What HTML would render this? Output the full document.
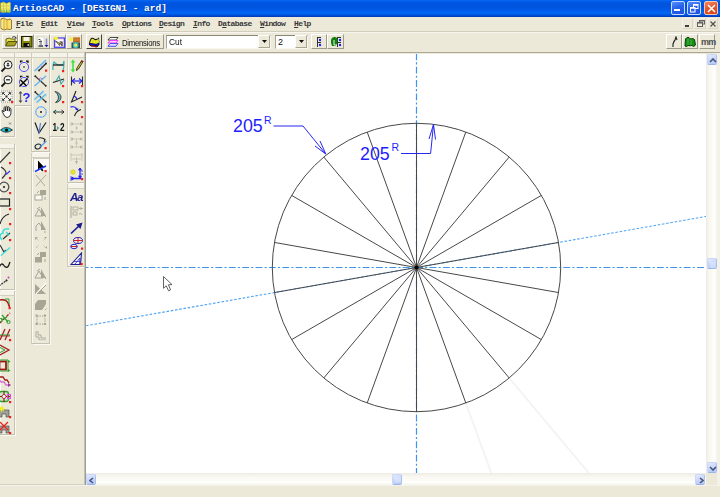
<!DOCTYPE html>
<html><head><meta charset="utf-8">
<style>
*{margin:0;padding:0;box-sizing:border-box}
html,body{width:720px;height:497px;overflow:hidden;background:#ECE9D8;font-family:"Liberation Sans",sans-serif}
.a{position:absolute}
#title{left:0;top:0;width:720px;height:17px;background:linear-gradient(#0A6AF0 0px,#0058E6 2px,#0053DD 6px,#005AE8 10px,#0068F5 13px,#0054DC 15px,#0040C0 16.5px,#ECE9D8 17px)}
#ttext{left:13px;top:2px;font:bold 9.5px/14px "Liberation Mono",monospace;letter-spacing:0px;color:#fff;text-shadow:1px 1px 0 #0a3aa0;white-space:pre}
.tb{top:1px;width:14px;height:14px;border:1px solid #c8dcff;border-radius:2px;background:linear-gradient(160deg,#5890fa,#2a62ec 45%,#1c50dc)}
#menu{left:0;top:17px;width:720px;height:14px;background:#ECE9D8}
.mi{top:19px;font:bold 8px/10px "Liberation Mono",monospace;letter-spacing:-0.6px;color:#383838;white-space:pre}
.mi u{text-decoration:underline}
#tbar{left:0;top:31px;width:720px;height:21px;background:#ECE9D8}
.btn{top:34px;width:16px;height:15px;border-right:1px solid #9d9a88;border-bottom:1px solid #9d9a88;border-left:1px solid #fff;border-top:1px solid #fff;background:#ECE9D8}
.ctb{border-right:1px solid #a8a595;border-bottom:1px solid #a8a595;border-left:1px solid #fff;border-top:1px solid #fff}
.sbb{width:10px;height:11px;border-radius:2px;background:linear-gradient(160deg,#e2eafe,#c4d4fb 60%,#b4c8f6);border:1px solid #c8d7fb;border-bottom-color:#9fb4e6;border-right-color:#aec0ee}
.tbx{background:#ECE9D8;border-right:1px solid #c5c2b2;border-bottom:1px solid #c5c2b2;box-shadow:inset 1px 0 0 #faf9f3,-1px 0 0 #cfccbc,1px 1px 0 #faf9f3}
.tbx::before{content:"";position:absolute;left:0;top:0;right:0;height:4px;background:#f5f3ea;border-bottom:1px solid #d3d0c0}
.ic{filter:blur(0.25px)}
#canvas{left:86px;top:54px;width:621px;height:419px;background:#fff;overflow:hidden}
</style></head><body>
<div id="title" class="a"></div>
<div id="ttext" class="a">ArtiosCAD - [DESIGN1 - ard]</div>
<div class="a tb" style="left:671px"><div class="a" style="left:2px;top:7px;width:6px;height:2px;background:#fff"></div></div>
<div class="a tb" style="left:687px"><svg class="a" style="left:2px;top:2px" width="9" height="9" viewBox="0 0 9 9"><rect x="3.5" y="0.5" width="4.5" height="4" fill="none" stroke="#fff" stroke-width="1"/><path d="M3.5 1h4.5" stroke="#fff" stroke-width="1.5"/><rect x="0.5" y="3.5" width="4.5" height="4.5" fill="#2a64e8" stroke="#fff" stroke-width="1"/><path d="M0.5 4h4.5" stroke="#fff" stroke-width="1.5"/></svg></div>
<div class="a tb" style="left:704px;border-color:#f4c4b4;background:linear-gradient(160deg,#f08868,#e25a30 45%,#d04418)"><svg class="a" style="left:1px;top:1px" width="11" height="11" viewBox="0 0 11 11"><path d="M2 2L9 9M9 2L2 9" stroke="#fff" stroke-width="1.5"/></svg></div>
<svg class="a" style="left:0;top:1px" width="12" height="13" viewBox="0 0 12 13"><path d="M0.5 2 L3.5 1 L6.5 2.5 L9.5 1 L10.5 2 L10.5 11 L9.5 11.5 L6.5 11 L3.5 11.5 L0.5 11Z" fill="#f0ec70" stroke="#b0a030" stroke-width="0.7"/><path d="M3.5 1v10.5M6.5 2.5v8.5M0.5 5h10M0.5 8h10" stroke="#c8c040" stroke-width="0.6"/><path d="M1 10h9" stroke="#30b030" stroke-width="1.2" stroke-dasharray="1.5 1"/></svg>
<div id="menu" class="a"></div>
<div class="a mi" style="left:16px"><u>F</u>ile</div>
<div class="a mi" style="left:41px"><u>E</u>dit</div>
<div class="a mi" style="left:67px"><u>V</u>iew</div>
<div class="a mi" style="left:92px"><u>T</u>ools</div>
<div class="a mi" style="left:122px"><u>O</u>ptions</div>
<div class="a mi" style="left:159px"><u>D</u>esign</div>
<div class="a mi" style="left:193px"><u>I</u>nfo</div>
<div class="a mi" style="left:218px">D<u>a</u>tabase</div>
<div class="a mi" style="left:260px"><u>W</u>indow</div>
<div class="a mi" style="left:294px"><u>H</u>elp</div>

<svg class="a" style="left:0;top:17px" width="13" height="14" viewBox="0 0 13 14"><path d="M1 2 L4 1 L7 3 L10 2 L11.5 3 L11.5 12 L10 12.5 L7 12 L4 13 L1 11.5Z" fill="#f8e070" stroke="#806010" stroke-width="0.8"/><path d="M4 1v12M7 3v9" stroke="#d0a030" stroke-width="0.8"/><path d="M2 3v8" stroke="#fff8b0" stroke-width="1"/></svg>
<div class="a" style="left:682px;top:18px;width:11px;height:11px;border:1px solid #f4f2ea;border-right-color:#dcd8c8;border-bottom-color:#dcd8c8"><div class="a" style="left:2px;top:6px;width:4px;height:2px;background:#404040"></div></div>
<div class="a" style="left:694px;top:18px;width:12px;height:11px;border:1px solid #f4f2ea;border-right-color:#dcd8c8;border-bottom-color:#dcd8c8"><svg class="a" style="left:2px;top:1px" width="8" height="7"><rect x="2.5" y="0.5" width="5" height="3.5" fill="none" stroke="#606060"/><rect x="0.5" y="2.5" width="5" height="4" fill="#ECE9D8" stroke="#606060"/><path d="M1 3h4M3 1h4" stroke="#606060"/></svg></div>
<div class="a" style="left:707px;top:18px;width:11px;height:11px;border:1px solid #f4f2ea;border-right-color:#dcd8c8;border-bottom-color:#dcd8c8"><svg class="a" style="left:1px;top:1px" width="8" height="8"><path d="M1.5 1.5L6.5 6.5M6.5 1.5L1.5 6.5" stroke="#505050" stroke-width="1.2"/></svg></div>
<div id="tbar" class="a"></div><div class="a" style="left:0;top:31px;width:720px;height:1px;background:#d2cebe"></div><div class="a" style="left:0;top:32px;width:720px;height:1px;background:#f7f5ee"></div>

<div class="a btn" style="left:2px"><svg class="a" style="left:1px;top:0px" width="14" height="13" viewBox="0 0 14 13">
<path d="M2 10 L2 4 L5 3 L7 4 L11 4 L11 6" fill="#e6e04a" stroke="#404000" stroke-width="0.8"/>
<path d="M1.5 11 L4 6.5 L13 6.5 L10.5 11 Z" fill="#a8a020" stroke="#3a3a00" stroke-width="0.8"/>
<path d="M8 2.5 Q10 0.5 12 2.5" fill="none" stroke="#202020" stroke-width="0.8"/><path d="M11 2 L13 3 L11.5 4Z" fill="#202020"/></svg></div>
<div class="a btn" style="left:18px"><svg class="a" style="left:2px;top:1px" width="12" height="12" viewBox="0 0 12 12">
<rect x="0.5" y="0.5" width="10.5" height="10.5" fill="#8a8a10" stroke="#202000"/><rect x="2.5" y="1" width="6" height="4" fill="#f4f4e8"/><rect x="2.5" y="7" width="6" height="4" fill="#101010"/><rect x="6.5" y="8" width="1.5" height="2" fill="#c0c0c0"/></svg></div>
<div class="a btn" style="left:34px"><svg class="a" style="left:0px;top:0px" width="15" height="14" viewBox="0 0 15 14">
<rect x="2.5" y="2" width="6.5" height="10" fill="#fff" stroke="#d8d6cc" stroke-width="0.8"/><path d="M3.5 4.5h1.5l1 1M4 6.5h3M4.5 8h2.5" stroke="#404040" stroke-width="0.9"/><path d="M3.5 11h4.5" stroke="#202020" stroke-width="1.3"/><path d="M4.5 9.5h2.5" stroke="#909090" stroke-width="0.8"/>
<path d="M11.5 3.5 V10" stroke="#8c8cd8" stroke-width="1.6"/><path d="M9.5 10 L13.5 10 L11.5 12.3Z" fill="#1818a8"/></svg></div>
<div class="a btn" style="left:50px"><svg class="a" style="left:0px;top:0px" width="15" height="14" viewBox="0 0 15 14">
<rect x="3.5" y="3" width="10" height="9.3" fill="#fff" stroke="#4848f0" stroke-width="1.3"/><rect x="4.6" y="4.1" width="7.8" height="7.1" fill="none" stroke="#f07090" stroke-width="0.6" stroke-dasharray="1 1"/>
<ellipse cx="4.8" cy="3.3" rx="2.4" ry="1.6" fill="#f4f030"/><path d="M4.5 6 L8.5 10.5 L9 8.5 L10.5 9.5Z" fill="#f0e040" stroke="#303020" stroke-width="0.7"/><path d="M8.5 7 h2.5 v4" fill="none" stroke="#202020" stroke-width="1.1"/></svg></div>
<div class="a btn" style="left:66px"><svg class="a" style="left:0px;top:0px" width="15" height="14" viewBox="0 0 15 14">
<rect x="6" y="2.3" width="7" height="5" fill="#e8a040"/><path d="M6 3.2h7M6 5h7M6 6.6h7" stroke="#a05020" stroke-width="0.8"/>
<rect x="4.5" y="7.5" width="8.5" height="5.5" fill="#404848"/><circle cx="8.7" cy="10.2" r="2.3" fill="#f0f040" stroke="#30c0c8" stroke-width="1.3"/>
<path d="M1.5 4.5 L3 3.5 L3.5 1.5 L4.5 3 L7 2.8 L5 4.5 L6.5 6 L4.3 5.5 L3.5 7 L3 5.5Z" fill="#f4f040"/></svg></div>
<div class="a btn" style="left:86px;border-right-color:#404040;border-bottom-color:#404040"><svg class="a" style="left:0px;top:0px" width="15" height="14" viewBox="0 0 15 14">
<path d="M1.8 9.5 Q2 6 4 3 Q6 2 8 4 Q10 4.5 12 2.2 L12.5 9.5 Q11 12 9 12.5 Q7 11 5.5 11.5 Q3.5 12 1.8 9.5Z" fill="#101010"/>
<path d="M3 8 Q3.5 5.5 4.8 3.8 Q6.5 3.3 8 5.2 Q10 5.5 11.6 3.5 L12 7.6 Q10 9 8 8.8 Q6 7.8 3 8Z" fill="#f0f028"/><path d="M6 4v5M9 5v4M4 6h8" stroke="#c8c820" stroke-width="0.5"/>
<path d="M2.8 8.6 Q5.5 8.2 8 9.3 Q10 9.5 12 8.2 L12 9.6 Q10 11 8.3 10.6 Q6 9.8 3 10.2Z" fill="#1818d0"/>
<path d="M3.5 10.6 Q6 10.3 8 11 Q9.5 11.6 11 10.8 L9 12.2 Q7 11.8 4.5 11.6Z" fill="#d01818"/></svg></div>
<div class="a btn" style="left:105px;width:59px"><svg class="a" style="left:1px;top:2px" width="12" height="10" viewBox="0 0 12 10">
<path d="M3 0.5 L11 0.5 L9 3 L1 3Z" fill="#fff" stroke="#303030" stroke-width="0.9"/>
<path d="M3 3.5 L11 3.5 L9 6 L1 6Z" fill="#ffd0ff" stroke="#f040f0" stroke-width="1"/>
<path d="M3 6.5 L11 6.5 L9 9.3 L1 9.3Z" fill="#e0e0ff" stroke="#5050f0" stroke-width="1"/></svg>
<div class="a" style="left:16px;top:1.5px;font:9px/12px 'Liberation Sans',sans-serif;letter-spacing:-0.3px;color:#101010;transform:scaleX(0.86);transform-origin:0 0">Dimensions</div></div>
<div class="a" style="left:166px;top:35px;width:105px;height:14px;background:#fff;border:1px solid;border-color:#8a8878 #f8f8f0 #f8f8f0 #a8a696"></div>
<div class="a" style="left:169px;top:35.5px;font:9.5px/12px 'Liberation Sans',sans-serif;color:#101010;transform:scaleX(0.88);transform-origin:0 0">Cut</div>
<div class="a ctb" style="left:258px;top:35px;width:12px;height:13px;background:#ECE9D8"><svg class="a" style="left:3px;top:4px" width="6" height="4"><path d="M0 0h5L2.5 3Z" fill="#101010"/></svg></div>
<div class="a" style="left:275px;top:35px;width:33px;height:14px;background:#fff;border:1px solid;border-color:#8a8878 #f8f8f0 #f8f8f0 #a8a696"></div>
<div class="a" style="left:278px;top:36px;font:9px/12px 'Liberation Sans',sans-serif;color:#101010">2</div>
<div class="a ctb" style="left:295px;top:35px;width:12px;height:13px;background:#ECE9D8"><svg class="a" style="left:3px;top:4px" width="6" height="4"><path d="M0 0h5L2.5 3Z" fill="#101010"/></svg></div>
<div class="a btn" style="left:311px;width:16px"><svg class="a" style="left:4px;top:1px" width="8" height="12" viewBox="0 0 8 12">
<path d="M1 1.5h4M1.5 1v5M1 6.5h4M1.5 6v5" stroke="#303030" stroke-width="1"/><circle cx="4" cy="4" r="1.2" fill="#2020ff"/><circle cx="4" cy="9" r="1.2" fill="#2020ff"/></svg></div>
<div class="a btn" style="left:327px;width:17px"><svg class="a" style="left:2px;top:1px" width="13" height="12" viewBox="0 0 13 12">
<path d="M7 1.5h4M7.5 1v5M7 6.5h4M7.5 6v5" stroke="#303030" stroke-width="1"/><circle cx="10" cy="4" r="1.2" fill="#2020ff"/><circle cx="10" cy="9" r="1.2" fill="#2020ff"/>
<path d="M1 4 Q2 0.5 5 1 Q8 1.5 7.5 5 L7 8 L6 10 L2 10 L1 7Z" fill="#108010"/><path d="M4 4v5h3" stroke="#fff" stroke-width="0.9" fill="none"/></svg></div>
<div class="a btn" style="left:666px"><svg class="a" style="left:4px;top:1px" width="8" height="12" viewBox="0 0 8 12"><path d="M2 11 L2 8 Q3 5 4 4 L5 1 L6 4" fill="none" stroke="#202020" stroke-width="1.1"/></svg></div>
<div class="a btn" style="left:682px"><svg class="a" style="left:1px;top:1px" width="13" height="12" viewBox="0 0 13 12">
<path d="M1 10 L1.5 3 Q3 0.5 5 1.5 Q6 3 7 3 Q9 2 10.5 3.5 L11.5 9 Q10 11.5 8 9.5 Q6 10 4 9.5 Q2.5 11.5 1 10Z" fill="#189018" stroke="#064006" stroke-width="1"/><path d="M4 3v6M7 3.5v6" stroke="#60c060" stroke-width="0.7"/></svg></div>
<div class="a btn" style="left:699px"><div class="a" style="left:1px;top:1px;font:bold 9px/12px 'Liberation Sans',sans-serif;color:#505050;letter-spacing:-0.7px">mm</div></div>

<!--TOOLBOX-->
<div class="a tbx" style="left:0px;top:53px;width:15px;height:84px"></div>
<svg class="a ic" style="left:0.0px;top:59.0px" width="14" height="14" viewBox="0 0 14 14"><circle cx="8" cy="5.8" r="4" fill="#f8f8f4" stroke="#1a1a1a" stroke-width="1"/><path d="M5.3 8.7L1.5 12.5" stroke="#1a1a1a" stroke-width="1.9"/><path d="M6.5 6.3h3M8 4.3v3.5" stroke="#1a1a1a" stroke-width="0.9"/><path d="M8 3.6l-1.2 1.3h2.4z" fill="#1a1a1a"/></svg>
<svg class="a ic" style="left:0.0px;top:74.47px" width="14" height="14" viewBox="0 0 14 14"><circle cx="8" cy="5.8" r="4" fill="#f8f8f4" stroke="#1a1a1a" stroke-width="1"/><path d="M5.3 8.7L1.5 12.5" stroke="#1a1a1a" stroke-width="1.9"/><path d="M6 5.8h4" stroke="#1a1a1a" stroke-width="1.2"/></svg>
<svg class="a ic" style="left:0.0px;top:89.94px" width="14" height="14" viewBox="0 0 14 14"><rect x="1" y="1" width="11" height="11" fill="#f4f4ec" stroke="#808080" stroke-width="0.8" stroke-dasharray="1 1"/><path d="M3 3l2.2 2.2M10 3l-2.2 2.2M3 10l2.2-2.2M10 10l-2.2-2.2" stroke="#303030" stroke-width="1"/><path d="M2.2 2.2h2.3v0.8h-1.5v1.5h-0.8zM10.8 2.2h-2.3v0.8h1.5v1.5h0.8zM2.2 10.8h2.3v-0.8h-1.5v-1.5h-0.8zM10.8 10.8h-2.3v-0.8h1.5v-1.5h0.8z" fill="#202020"/><rect x="5.5" y="5.5" width="2" height="2" fill="#303030"/><rect x="11" y="11" width="2.2" height="2.2" fill="#f02020"/></svg>
<svg class="a ic" style="left:0.0px;top:105.41px" width="14" height="14" viewBox="0 0 14 14"><path d="M3 8 L2 6 Q2 5 3 5.5 L4 7 L4 2.5 Q4.5 1.5 5.2 2.5 L5.5 6 L5.8 1.5 Q6.5 0.8 7.2 1.5 L7.3 6 L7.8 2 Q8.5 1.2 9.2 2 L9.2 6.2 L9.8 3.5 Q10.6 3 11 3.8 L10.8 9 Q10 12.5 7 12.5 Q4.5 12.5 3 8Z" fill="#fff" stroke="#202020" stroke-width="0.9"/></svg>
<svg class="a ic" style="left:0.0px;top:120.88px" width="14" height="14" viewBox="0 0 14 14"><path d="M9 1.5l2 2M11 1.5l-2 2" stroke="#707070" stroke-width="0.8"/><path d="M0.5 9 Q6 4 12.5 9 Q6 13.5 0.5 9Z" fill="#10c8d8" stroke="#303030" stroke-width="0.9"/><circle cx="6.5" cy="9" r="1.6" fill="#000"/></svg>
<div class="a tbx" style="left:15px;top:53px;width:17px;height:53px"></div>
<svg class="a ic" style="left:16.5px;top:59.0px" width="14" height="14" viewBox="0 0 14 14"><circle cx="7" cy="8" r="4.6" fill="none" stroke="#5050f0" stroke-width="1"/><circle cx="7" cy="8" r="0.8" fill="#000"/><path d="M3.5 3.5 L3.5 2.2 L5.5 2.2M9 2.2 L11 2.2 L11 4" stroke="#000" stroke-width="1.2" fill="none"/></svg>
<svg class="a ic" style="left:16.5px;top:74.47px" width="14" height="14" viewBox="0 0 14 14"><circle cx="7" cy="8" r="4.6" fill="none" stroke="#5050f0" stroke-width="1"/><path d="M2.5 12.5 L10.5 4.5M3.5 6 L9.5 12" stroke="#000" stroke-width="1.4"/><path d="M3.5 3.5 L3.5 2.2 L5.5 2.2M9 2.2 L11 2.2 L11 4" stroke="#000" stroke-width="1.1" fill="none"/></svg>
<svg class="a ic" style="left:16.5px;top:89.94px" width="14" height="14" viewBox="0 0 14 14"><path d="M3.5 2.5v9" stroke="#707070" stroke-width="1.3"/><path d="M3.5 1l-2 2.5h4zM3.5 13l-2-2.5h4z" fill="#505050"/><text x="5.5" y="12" font-family="Liberation Sans,sans-serif" font-weight="bold" font-size="13" fill="#2020ff">?</text></svg>
<div class="a tbx" style="left:32px;top:53px;width:18px;height:99px"></div>
<svg class="a ic" style="left:34.0px;top:59.0px" width="14" height="14" viewBox="0 0 14 14"><path d="M0.5 12 L12 1" stroke="#60b0f0" stroke-width="1.3"/><path d="M2 12.5 L13 2" stroke="#a0d8ff" stroke-width="0.6"/><path d="M5 11.5 L12 4.5" stroke="#202020" stroke-width="1.1"/><circle cx="5" cy="11.5" r="0.9" fill="#202020"/><circle cx="12" cy="4.5" r="0.9" fill="#202020"/><path d="M7 8l1.5-1" stroke="#c060c0"/><rect x="11" y="10.5" width="2.2" height="2.2" fill="#f02020"/></svg>
<svg class="a ic" style="left:34.0px;top:74.47px" width="14" height="14" viewBox="0 0 14 14"><path d="M1 2 L12 12" stroke="#303030" stroke-width="1.1"/><circle cx="1.3" cy="2.2" r="0.9" fill="#202020"/><circle cx="11.8" cy="11.8" r="0.9" fill="#202020"/><path d="M0.5 12 L12 2" stroke="#60b0f0" stroke-width="1.3"/><path d="M4 5 Q6.5 3 9 5" stroke="#c070c0" fill="none" stroke-width="0.9"/></svg>
<svg class="a ic" style="left:34.0px;top:89.94px" width="14" height="14" viewBox="0 0 14 14"><path d="M1 2 L12 12" stroke="#303030" stroke-width="1.1"/><circle cx="1.3" cy="2" r="0.9" fill="#202020"/><circle cx="11.8" cy="11.8" r="0.9" fill="#202020"/><path d="M0.5 9.5 L9.5 1M2.5 12.5 L12 4" stroke="#60b0f0" stroke-width="1.2"/><path d="M0 11 L10 2.5M4 12.5 L13 5" stroke="#80e0f0" stroke-width="0.6"/></svg>
<svg class="a ic" style="left:34.0px;top:105.41px" width="14" height="14" viewBox="0 0 14 14"><circle cx="7" cy="7" r="5.2" fill="none" stroke="#4aa0f8" stroke-width="1.2" stroke-dasharray="1.2 0.4"/><circle cx="7" cy="7" r="0.9" fill="#000"/></svg>
<svg class="a ic" style="left:34.0px;top:120.88px" width="14" height="14" viewBox="0 0 14 14"><path d="M1 1.5 L5 12 L12 1.5" fill="none" stroke="#202020" stroke-width="1.2"/><path d="M5 12 L6.5 2" stroke="#5080f0" stroke-width="1.2"/></svg>
<svg class="a ic" style="left:34.0px;top:136.35000000000002px" width="14" height="14" viewBox="0 0 14 14"><ellipse cx="4" cy="10.5" rx="3" ry="2.3" fill="none" stroke="#202020" stroke-width="1.1" transform="rotate(-20 4 10.5)"/><path d="M5 2 Q8 1 11 3.5 L10 6" fill="none" stroke="#202020" stroke-width="1.1"/><path d="M5.5 11.5 L12.5 5" stroke="#4a90f0" stroke-width="1.1"/><rect x="10.5" y="11" width="2.2" height="2.2" fill="#f02020"/></svg>
<div class="a tbx" style="left:50px;top:53px;width:18px;height:84px"></div>
<svg class="a ic" style="left:52.0px;top:59.0px" width="14" height="14" viewBox="0 0 14 14"><path d="M1 11 Q0.5 6 2 3 Q4 5 6 6 L11 6 L12 2 Q12 9 11 12" fill="none" stroke="#40b0b0" stroke-width="1.2"/><path d="M1 6 L11.5 6" stroke="#101010" stroke-width="1.2"/><rect x="10" y="11" width="2.2" height="2.2" fill="#f02020"/></svg>
<svg class="a ic" style="left:52.0px;top:74.47px" width="14" height="14" viewBox="0 0 14 14"><path d="M1 8.5 L12 5" stroke="#202020" stroke-width="1.2"/><path d="M4 7 L7 2 L9 10 L12 6" fill="none" stroke="#40a8a8" stroke-width="1.2"/><rect x="10" y="11" width="2.2" height="2.2" fill="#f02020"/></svg>
<svg class="a ic" style="left:52.0px;top:89.94px" width="14" height="14" viewBox="0 0 14 14"><path d="M3 1.5 Q9 3 9 7.5 Q8.5 12 3.5 12.5 Q7 10 6.5 7 Q6 3.5 3 1.5Z" fill="#60c0c0" stroke="#303030" stroke-width="0.9"/><rect x="10" y="11" width="2.2" height="2.2" fill="#f02020"/></svg>
<svg class="a ic" style="left:52.0px;top:105.41px" width="14" height="14" viewBox="0 0 14 14"><path d="M1.5 7h10.5" stroke="#202020" stroke-width="0.9"/><path d="M1.5 7l2.5-2M1.5 7l2.5 2M12 7l-2.5-2M12 7l-2.5 2" stroke="#202020" stroke-width="0.9"/><path d="M3.5 6.5h2" stroke="#40b0b0" stroke-width="1.4"/></svg>
<svg class="a ic" style="left:52.0px;top:120.88px" width="14" height="14" viewBox="0 0 14 14"><g transform="scale(0.82 1)"><text x="0.5" y="10" font-family="Liberation Sans,sans-serif" font-weight="bold" font-size="10" fill="#101010">1</text><text x="9.8" y="10" font-family="Liberation Sans,sans-serif" font-weight="bold" font-size="10" fill="#101010">2</text></g><path d="M5 5v4l2.2-2z" fill="#30a8a8"/></svg>
<div class="a tbx" style="left:68px;top:53px;width:17px;height:130px"></div>
<svg class="a ic" style="left:69.5px;top:59.0px" width="14" height="14" viewBox="0 0 14 14"><path d="M3 2v10" stroke="#40e040" stroke-width="1.6"/><path d="M3 0.5l-2.3 3h4.6zM3 13.5l-2.3-3h4.6z" fill="#40e040"/><path d="M6.5 11.5 L7 9 L11.5 2 Q12.5 1.5 13 2.5 L8.5 10 Z" fill="#f0e020" stroke="#202020" stroke-width="0.9"/><path d="M11 2 L13 3" stroke="#802020" stroke-width="1.5"/></svg>
<svg class="a ic" style="left:69.5px;top:74.47px" width="14" height="14" viewBox="0 0 14 14"><path d="M1.5 2.5v9M12.5 2.5v9" stroke="#303030" stroke-width="1.1"/><path d="M2 7h10" stroke="#2424f0" stroke-width="1.2"/><path d="M2 7l3-2.5M2 7l3 2.5M12 7l-3-2.5M12 7l-3 2.5" stroke="#2424f0" stroke-width="1.1"/><rect x="11" y="11" width="2.2" height="2.2" fill="#f02020"/></svg>
<svg class="a ic" style="left:69.5px;top:89.94px" width="14" height="14" viewBox="0 0 14 14"><path d="M6 1 L1.5 12 L12 7" fill="none" stroke="#202020" stroke-width="1.1"/><path d="M4 6 Q6 7 7 9" fill="none" stroke="#2a2af0" stroke-width="1.3"/><rect x="11" y="11" width="2.2" height="2.2" fill="#f02020"/></svg>
<svg class="a ic" style="left:69.5px;top:105.41px" width="14" height="14" viewBox="0 0 14 14"><path d="M0.5 2 Q4 1 6 3 Q6.5 4 6.5 5" fill="none" stroke="#4040f0" stroke-width="1.4"/><path d="M4.5 11 Q6 6 11 4.5" fill="none" stroke="#202020" stroke-width="1.1"/><path d="M5 3.5l2.5 2.5l1-2.5z" fill="#2020c0"/><rect x="11" y="11" width="2.2" height="2.2" fill="#f02020"/></svg>
<svg class="a ic" style="left:69.5px;top:120.88px" width="14" height="14" viewBox="0 0 14 14"><path d="M1 1v4M12 1v4M1 3h11M1 9v4M12 9v4M1 11h11M6.5 5v4M5 7h3" stroke="#bdbaab" stroke-width="0.7"/><path d="M1 3l2-1.5v3zM12 3l-2-1.5v3zM1 11l2-1.5v3zM12 11l-2-1.5v3z" fill="#b4b1a2"/></svg>
<svg class="a ic" style="left:69.5px;top:136.35000000000002px" width="14" height="14" viewBox="0 0 14 14"><path d="M1 1v4M12 1v4M1 3h11M1 9v4M12 9v4M1 11h11M6.5 3v8M5 7h3" stroke="#bdbaab" stroke-width="0.7"/><path d="M1 3l2-1.5v3zM12 3l-2-1.5v3zM1 11l2-1.5v3zM12 11l-2-1.5v3z" fill="#b4b1a2"/></svg>
<svg class="a ic" style="left:69.5px;top:151.82px" width="14" height="14" viewBox="0 0 14 14"><path d="M1 1v8M12 1v8M1 3h11M2 7h9M6.5 5v7" stroke="#bdbaab" stroke-width="0.7"/><path d="M5 9l1.5 3l1.5-3z" fill="#b4b1a2"/></svg>
<svg class="a ic" style="left:69.5px;top:167.29000000000002px" width="14" height="14" viewBox="0 0 14 14"><path d="M1 3l1.5 1 0.5-2 0.5 2 1.5-1-1 1.7 2 0.3-2 0.3 1 1.7-1.5-1-0.5 2-0.5-2-1.5 1 1-1.7-2-0.3 2-0.3z" fill="#f0f020" stroke="#c8c800" stroke-width="0.4"/><path d="M10 1v11M1 11.5h11" stroke="#2424f0" stroke-width="1.3"/><path d="M1 9v5M10 1l-1.5 2h3zM10 11l-1.5-2h3zM1 11.5l2-1.5v3z" fill="#2424f0" stroke="#2424f0" stroke-width="0.8"/><path d="M11 4h2M11 7h2" stroke="#2424f0" stroke-width="0.8"/><rect x="11" y="11" width="2.2" height="2.2" fill="#f02020"/></svg>
<div class="a tbx" style="left:68px;top:184px;width:17px;height:83px"></div>
<svg class="a ic" style="left:69.5px;top:190.0px" width="14" height="14" viewBox="0 0 14 14"><text x="0" y="11" font-family="Liberation Sans,sans-serif" font-style="italic" font-weight="bold" font-size="11.5" fill="#1c1c90" letter-spacing="-1.2">Aa</text></svg>
<svg class="a ic" style="left:69.5px;top:205.47px" width="14" height="14" viewBox="0 0 14 14"><path d="M1 1v12" stroke="#a8a595"/><rect x="3" y="2" width="5" height="3" fill="none" stroke="#a8a595" stroke-width="0.8"/><rect x="3" y="7" width="4" height="3" fill="none" stroke="#a8a595" stroke-width="0.8"/><path d="M9 3.5h4M11 2v3M9 9q2-2 3 1" stroke="#a8a595" stroke-width="0.8" fill="none"/></svg>
<svg class="a ic" style="left:69.5px;top:220.94px" width="14" height="14" viewBox="0 0 14 14"><path d="M1 12.5 L11 3" stroke="#1c1c90" stroke-width="1.6"/><path d="M12.5 1.5 L6 3.5 L10.5 8Z" fill="#1c1c90"/></svg>
<svg class="a ic" style="left:69.5px;top:236.41px" width="14" height="14" viewBox="0 0 14 14"><ellipse cx="8" cy="4.5" rx="4.5" ry="3" fill="#f0f0f0" stroke="#2020c0" stroke-width="1"/><path d="M3.5 4.5h9M8 1.5v6" stroke="#d02020" stroke-width="1"/><ellipse cx="4" cy="10.5" rx="3.3" ry="2.2" fill="#f0f0f0" stroke="#2020c0" stroke-width="1"/><path d="M1 10.5h6" stroke="#d02020" stroke-width="1"/><rect x="11" y="11.5" width="2.2" height="2.2" fill="#f02020"/></svg>
<svg class="a ic" style="left:69.5px;top:251.88px" width="14" height="14" viewBox="0 0 14 14"><path d="M1 12.5 L11.5 1 L10.5 12.5Z" fill="#f4f4ff" stroke="#1c1c90" stroke-width="1.1"/><path d="M5 12 L10 6 L9.5 12" fill="none" stroke="#2020c0" stroke-width="0.8"/><path d="M4 9.5h6" stroke="#2020c0" stroke-width="0.7"/><rect x="10.5" y="11" width="2.2" height="2.2" fill="#f02020"/></svg>
<div class="a tbx" style="left:0px;top:143.5px;width:15px;height:146.5px"></div>
<svg class="a ic" style="left:-1.5px;top:150.5px" width="14" height="14" viewBox="0 0 14 14"><path d="M0 12.5 L11 1" stroke="#303030" stroke-width="1.1"/><rect x="10" y="11" width="2.2" height="2.2" fill="#f02020"/></svg>
<svg class="a ic" style="left:-1.5px;top:165.97px" width="14" height="14" viewBox="0 0 14 14"><path d="M2 1 Q7 4 7 7 Q6 10 3 12.5" fill="none" stroke="#303030" stroke-width="1.1"/><path d="M7 8.5 L11 5" stroke="#3a3af0" stroke-width="1.3"/><rect x="10" y="11" width="2.2" height="2.2" fill="#f02020"/></svg>
<svg class="a ic" style="left:-1.5px;top:181.44px" width="14" height="14" viewBox="0 0 14 14"><circle cx="5" cy="6" r="4.8" fill="none" stroke="#505050" stroke-width="1.3"/><circle cx="5" cy="6" r="0.9" fill="#000"/><rect x="10" y="11" width="2.2" height="2.2" fill="#f02020"/></svg>
<svg class="a ic" style="left:-1.5px;top:196.91px" width="14" height="14" viewBox="0 0 14 14"><rect x="0.5" y="2" width="10" height="7" fill="none" stroke="#202020" stroke-width="1.2"/><rect x="10" y="11" width="2.2" height="2.2" fill="#f02020"/></svg>
<svg class="a ic" style="left:-1.5px;top:212.38px" width="14" height="14" viewBox="0 0 14 14"><path d="M1 12 Q3 4 10 2" fill="none" stroke="#202020" stroke-width="1.1"/><rect x="10" y="11" width="2.2" height="2.2" fill="#f02020"/></svg>
<svg class="a ic" style="left:-1.5px;top:227.85000000000002px" width="14" height="14" viewBox="0 0 14 14"><path d="M10 1 Q3 0 4 6" fill="none" stroke="#20e0e0" stroke-width="1.4"/><path d="M3 12 Q-1 8 3 5" fill="none" stroke="#20e0e0" stroke-width="1.4"/><path d="M4 11 L11 5" stroke="#303030" stroke-width="1.1"/><path d="M7 4 Q10 6 9 8" fill="none" stroke="#20e0e0" stroke-width="1.2"/><rect x="10" y="11" width="2.2" height="2.2" fill="#f02020"/></svg>
<svg class="a ic" style="left:-1.5px;top:243.32px" width="14" height="14" viewBox="0 0 14 14"><path d="M1 2 L5 9 L7 7" fill="none" stroke="#303030" stroke-width="1.1"/><path d="M2 12.5 L11 4.5" stroke="#40e0e0" stroke-width="1.4"/></svg>
<svg class="a ic" style="left:-1.5px;top:258.79px" width="14" height="14" viewBox="0 0 14 14"><path d="M0 9 Q2 3 4.5 6 Q7 10 9.5 7 L11 3" fill="none" stroke="#202020" stroke-width="1.3"/></svg>
<svg class="a ic" style="left:-1.5px;top:274.26px" width="14" height="14" viewBox="0 0 14 14"><path d="M0 12 L8 6" stroke="#303030" stroke-width="1.2" stroke-dasharray="2 1"/><circle cx="7.5" cy="6.5" r="1" fill="#202020"/><circle cx="9.5" cy="3.5" r="1" fill="#c040c0"/></svg>
<div class="a tbx" style="left:0px;top:291px;width:15px;height:144px"></div>
<svg class="a ic" style="left:-1.5px;top:297.0px" width="14" height="14" viewBox="0 0 14 14"><path d="M0 3 Q9 1 10.5 10" fill="none" stroke="#a01818" stroke-width="1.5"/><path d="M6 2 L10 2 L10 7" fill="none" stroke="#30a030" stroke-width="1"/><rect x="9.5" y="10" width="2.2" height="2.2" fill="#f02020"/></svg>
<svg class="a ic" style="left:-1.5px;top:312.47px" width="14" height="14" viewBox="0 0 14 14"><path d="M1 11 L11 1" stroke="#a02020" stroke-width="1.3" stroke-dasharray="3 1.5"/><path d="M3 3 L9 10M2 8 L8 5" stroke="#30a030" stroke-width="1.2"/><circle cx="9.5" cy="10" r="1.6" fill="none" stroke="#30a030" stroke-width="1"/><circle cx="1.8" cy="8" r="1.6" fill="none" stroke="#30a030" stroke-width="1"/></svg>
<svg class="a ic" style="left:-1.5px;top:327.94px" width="14" height="14" viewBox="0 0 14 14"><path d="M1 12 L6 1M6 12 L11 1" stroke="#a02020" stroke-width="1.3"/><path d="M0 7h11" stroke="#30a030" stroke-width="1.1"/><path d="M0 8h11" stroke="#a02020" stroke-width="0.8"/><rect x="10" y="11" width="2.2" height="2.2" fill="#f02020"/></svg>
<svg class="a ic" style="left:-1.5px;top:343.41px" width="14" height="14" viewBox="0 0 14 14"><path d="M0 1.5 L10 7 L0 12.5" fill="none" stroke="#a02020" stroke-width="1.3"/><path d="M0 4 L6 7 L0 10" fill="none" stroke="#30a030" stroke-width="1"/></svg>
<svg class="a ic" style="left:-1.5px;top:358.88px" width="14" height="14" viewBox="0 0 14 14"><rect x="0.5" y="2.5" width="6.5" height="8" fill="none" stroke="#a01818" stroke-width="1.8"/><path d="M0 1h9v11H0" fill="none" stroke="#30a030" stroke-width="1"/><path d="M9 1l2.5 1.5L9 4zM9 10l2.5 1.5L9 13z" fill="#30a030"/></svg>
<svg class="a ic" style="left:-1.5px;top:374.35px" width="14" height="14" viewBox="0 0 14 14"><path d="M0 3 L4 3 L6 6 L8 6 L10 9" fill="none" stroke="#a01818" stroke-width="1.3"/><path d="M0 5 L2 8 L5 8 L7 11 L10 11" fill="none" stroke="#d070d0" stroke-width="1.3"/><path d="M9 9l3 2-3 2z" fill="#a030a0"/></svg>
<svg class="a ic" style="left:-1.5px;top:389.82px" width="14" height="14" viewBox="0 0 14 14"><rect x="0" y="1.5" width="9.5" height="10" rx="2.5" fill="#c8e8c8" stroke="#30a030" stroke-width="1.3"/><path d="M0 6.5h11M5 1v11" stroke="#a01818" stroke-width="1.2"/><circle cx="5" cy="6.5" r="2" fill="#fff" stroke="#a01818" stroke-width="0.8"/><rect x="8.5" y="4.5" width="3" height="4" fill="none" stroke="#f040f0" stroke-width="1"/><rect x="10" y="11" width="2.2" height="2.2" fill="#f02020"/></svg>
<svg class="a ic" style="left:-1.5px;top:405.29px" width="14" height="14" viewBox="0 0 14 14"><path d="M0 5 L10 5 L10 12 L7 12 L7 9 L3 9 L3 12 L0 12Z" fill="#a0a098" stroke="#404040" stroke-width="0.6"/><path d="M0 1l1.5 1.5 0.8-2.5 0.8 2.5 1.8-1.3-0.8 2 2.2 0.3-2 0.8 1 2-2-1-0.8 2-0.8-2-2 1 1-2-2-0.8 2.2-0.3z" fill="#f0f020"/><rect x="10" y="11" width="2.2" height="2.2" fill="#f02020"/></svg>
<svg class="a ic" style="left:-1.5px;top:420.76px" width="14" height="14" viewBox="0 0 14 14"><path d="M0 5 L10 5 L10 12 L7 12 L7 9 L3 9 L3 12 L0 12Z" fill="#a0a098" stroke="#404040" stroke-width="0.6"/><path d="M1 1 L9 9M9 1 L1 9" stroke="#f02020" stroke-width="1.2"/><rect x="10" y="11" width="2.2" height="2.2" fill="#f02020"/></svg>
<div class="a tbx" style="left:32px;top:152.5px;width:18px;height:191.5px"></div>
<div class="a" style="left:33px;top:158.0px;width:16px;height:14px;background:#fbfaf6;border-left:1px solid #d0cdbd;border-top:1px solid #d0cdbd"></div>
<svg class="a ic" style="left:34.0px;top:158.5px" width="14" height="14" viewBox="0 0 14 14"><path d="M4 1.5 L4 11 L6 9 L8 12.5 L9.5 11.5 L7.5 8.5 L10 8Z" fill="#000"/><path d="M1 12.5 L12 7" stroke="#1a3af0" stroke-width="1.5"/><rect x="10.5" y="11" width="2.2" height="2.2" fill="#f02020"/></svg>
<svg class="a ic" style="left:34.0px;top:173.97px" width="14" height="14" viewBox="0 0 14 14"><path d="M2 1 Q7 7 11 12M12 1 Q7 6 2 12" fill="none" stroke="#a8a595" stroke-width="0.9"/></svg>
<svg class="a ic" style="left:34.0px;top:189.44px" width="14" height="14" viewBox="0 0 14 14"><rect x="6" y="1" width="6" height="5" fill="#a8a595"/><rect x="1" y="6" width="7" height="5" fill="#fbfaf5" stroke="#a8a595"/><path d="M3 4l2-2M11 8v3" stroke="#a8a595"/></svg>
<svg class="a ic" style="left:34.0px;top:204.91px" width="14" height="14" viewBox="0 0 14 14"><path d="M7 2 L12 11 L7 11Z" fill="#a8a595"/><path d="M1 11 L5 4 L9 11Z" fill="none" stroke="#a8a595"/><path d="M3 4l3-2M11 12l1-1" stroke="#a8a595"/></svg>
<svg class="a ic" style="left:34.0px;top:220.38px" width="14" height="14" viewBox="0 0 14 14"><path d="M7 1 L12 10 L7 10Z" fill="#a8a595"/><path d="M2 11 L2 6 L5 3 L7 6" fill="none" stroke="#a8a595"/><path d="M10 12h2" stroke="#a8a595"/></svg>
<svg class="a ic" style="left:34.0px;top:235.85000000000002px" width="14" height="14" viewBox="0 0 14 14"><path d="M2 2l3 3M12 2l-3 3M2 12l3-3M12 12l-3-3" stroke="#a8a595" stroke-dasharray="1 1"/><path d="M1.5 1.5h2M1.5 1.5v2M12.5 1.5h-2M12.5 12.5v-2" stroke="#a8a595"/></svg>
<svg class="a ic" style="left:34.0px;top:251.32px" width="14" height="14" viewBox="0 0 14 14"><rect x="6" y="1" width="6" height="5" fill="#a8a595"/><rect x="1" y="6" width="7" height="5.5" fill="#a8a595"/><path d="M3 4l2-2M11 8v3" stroke="#a8a595"/></svg>
<svg class="a ic" style="left:34.0px;top:266.79px" width="14" height="14" viewBox="0 0 14 14"><path d="M7 2 L12 11 L7 11Z" fill="#a8a595"/><path d="M1 11 L5 4 L9 11Z" fill="none" stroke="#a8a595"/><path d="M3 4l3-2M11 12l1-1" stroke="#a8a595"/></svg>
<svg class="a ic" style="left:34.0px;top:282.26px" width="14" height="14" viewBox="0 0 14 14"><path d="M1 2 L12 12 L1 12Z" fill="#a8a595"/><path d="M2 12 L12 1" stroke="#fbfaf5" stroke-width="1.2"/><path d="M3 12 L12 3" stroke="#a8a595"/></svg>
<svg class="a ic" style="left:34.0px;top:297.73px" width="14" height="14" viewBox="0 0 14 14"><path d="M4 2 L12 2 L12 6 L8 12 L1 12 L1 6Z" fill="#a8a595"/><path d="M11 12l1.5-1.5" stroke="#a8a595"/></svg>
<svg class="a ic" style="left:34.0px;top:313.20000000000005px" width="14" height="14" viewBox="0 0 14 14"><rect x="3" y="3" width="8" height="8" fill="none" stroke="#a8a595" stroke-dasharray="1.5 1"/><rect x="1.5" y="1.5" width="2" height="2" fill="#a8a595"/><rect x="10" y="10" width="2" height="2" fill="#a8a595"/><rect x="10" y="1.5" width="2" height="2" fill="#a8a595"/><rect x="1.5" y="10" width="2" height="2" fill="#a8a595"/></svg>
<svg class="a ic" style="left:34.0px;top:328.67px" width="14" height="14" viewBox="0 0 14 14"><path d="M2 2v6h3v3h7" fill="none" stroke="#a8a595" stroke-width="0.9"/><path d="M4 2v4h3v3h5" fill="none" stroke="#a8a595" stroke-width="0.9"/><path d="M3 12h9" stroke="#f8f8f4" stroke-width="0.8"/></svg>
<!--/TOOLBOX-->
<div id="canvas" class="a">
<svg width="621" height="419" viewBox="86 54 621 419">
<g stroke="#f3f3f3" stroke-width="1.8" fill="none"><line x1="465.8" y1="403.0" x2="491.3" y2="473"/><line x1="509.2" y1="378.0" x2="588.9" y2="473"/></g>
<g stroke="#3c96f0" stroke-width="1.2" fill="none">
<line x1="86" y1="267.5" x2="707" y2="267.5" stroke-dasharray="6.85 2.2 2.1 2.23" stroke-dashoffset="4.38"/>
<line x1="416.5" y1="54" x2="416.5" y2="473" stroke-dasharray="6.85 2.2 2.1 2.23" stroke-dashoffset="0.7"/>
<line x1="86" y1="325.78" x2="707" y2="216.28" stroke-dasharray="2.6 1.7" stroke="#50a4f4" stroke-width="1.1"/>
</g>
<g stroke="#484848" stroke-width="1" fill="none">
<circle cx="416.5" cy="267.5" r="144.2"/>
<line x1="416.5" y1="267.5" x2="558.51" y2="242.46"/>
<line x1="416.5" y1="267.5" x2="541.38" y2="195.40"/>
<line x1="416.5" y1="267.5" x2="509.19" y2="157.04"/>
<line x1="416.5" y1="267.5" x2="465.82" y2="132.00"/>
<line x1="416.5" y1="267.5" x2="416.50" y2="123.30"/>
<line x1="416.5" y1="267.5" x2="367.18" y2="132.00"/>
<line x1="416.5" y1="267.5" x2="323.81" y2="157.04"/>
<line x1="416.5" y1="267.5" x2="291.62" y2="195.40"/>
<line x1="416.5" y1="267.5" x2="274.49" y2="242.46"/>
<line x1="416.5" y1="267.5" x2="274.49" y2="292.54"/>
<line x1="416.5" y1="267.5" x2="291.62" y2="339.60"/>
<line x1="416.5" y1="267.5" x2="323.81" y2="377.96"/>
<line x1="416.5" y1="267.5" x2="367.18" y2="403.00"/>
<line x1="416.5" y1="267.5" x2="416.50" y2="411.70"/>
<line x1="416.5" y1="267.5" x2="465.82" y2="403.00"/>
<line x1="416.5" y1="267.5" x2="509.19" y2="377.96"/>
<line x1="416.5" y1="267.5" x2="541.38" y2="339.60"/>
<line x1="416.5" y1="267.5" x2="558.51" y2="292.54"/>
</g>
<circle cx="416.5" cy="267.5" r="2" fill="#000"/>
<g stroke="#2828f0" stroke-width="1" fill="none">
<path d="M273.5 126 L303 126 L325.8 154"/>
<path d="M315 146 L325.8 154 L320 141"/>
<path d="M401 153.5 L430.6 153.5 L433.5 124.5"/>
<path d="M429 139 L433.5 124.5 L435.5 139.5"/>
</g>
<g fill="#1e1eff" font-family="Liberation Sans, sans-serif">
<text x="233" y="132" font-size="17.8">205</text><text x="264" y="123.5" font-size="10.5">R</text>
<text x="360" y="159.5" font-size="17.8">205</text><text x="391.5" y="151" font-size="10.5">R</text>
</g>
<path d="M163.5 276.5 L163.5 288.3 L166.2 285.8 L168.6 290.8 L170.6 289.8 L168.4 284.8 L172 284.6 Z" fill="#fff" stroke="#505050" stroke-width="0.9" stroke-linejoin="round"/>
</svg>
</div>

<div class="a" style="left:0px;top:52px;width:84px;height:1px;background:#d6d2c2"></div>
<div class="a" style="left:0px;top:484px;width:84px;height:1px;background:#d6d2c2"></div><div class="a" style="left:0px;top:485px;width:720px;height:1px;background:#f4f2ea"></div>
<div class="a" style="left:84px;top:52px;width:636px;height:1px;background:#aca899"></div>
<div class="a" style="left:84px;top:52px;width:1px;height:433px;background:#c6c2b2"></div><div class="a" style="left:85px;top:52px;width:1px;height:433px;background:#9e9c92"></div>
<div class="a" style="left:717px;top:53px;width:3px;height:432px;background:#f3f1e8"></div>
<div class="a" style="left:706px;top:54px;width:11px;height:419px;background:linear-gradient(90deg,#eeece2,#f8f7f1 30%,#fefefb 80%,#f4f3ec)"></div>
<div class="a" style="left:86px;top:473px;width:620px;height:12px;background:linear-gradient(#eeece2,#f8f7f1 30%,#fefefb 80%,#f4f3ec)"></div>
<div class="a" style="left:706px;top:473px;width:11px;height:12px;background:#ECE9D8"></div>
<div class="a sbb" style="left:707px;top:54px"><svg class="a" style="left:1px;top:3px" width="8" height="5"><path d="M1 4L4 1L7 4" fill="none" stroke="#4a5478" stroke-width="1.6"/></svg></div>
<div class="a sbb" style="left:707px;top:462px"><svg class="a" style="left:1px;top:3px" width="8" height="5"><path d="M1 1L4 4L7 1" fill="none" stroke="#4a5478" stroke-width="1.6"/></svg></div>
<div class="a sbb" style="left:707px;top:258px"><svg class="a" style="left:2px;top:3px" width="6" height="6"><path d="M0.5 1h5M0.5 3h5M0.5 5h5" stroke="#eef2ff" stroke-width="0.8"/></svg></div>
<div class="a sbb" style="left:86px;top:474px"><svg class="a" style="left:2px;top:2px" width="5" height="7"><path d="M4 1L1 3.5L4 6" fill="none" stroke="#4a5478" stroke-width="1.6"/></svg></div>
<div class="a sbb" style="left:695px;top:474px"><svg class="a" style="left:3px;top:2px" width="5" height="7"><path d="M1 1L4 3.5L1 6" fill="none" stroke="#4a5478" stroke-width="1.6"/></svg></div>
<div class="a sbb" style="left:392px;top:474px"><svg class="a" style="left:2px;top:2px" width="7" height="7"><path d="M1 0.5v5M3 0.5v5M5 0.5v5" stroke="#eef2ff" stroke-width="0.8"/></svg></div>
</body></html>
